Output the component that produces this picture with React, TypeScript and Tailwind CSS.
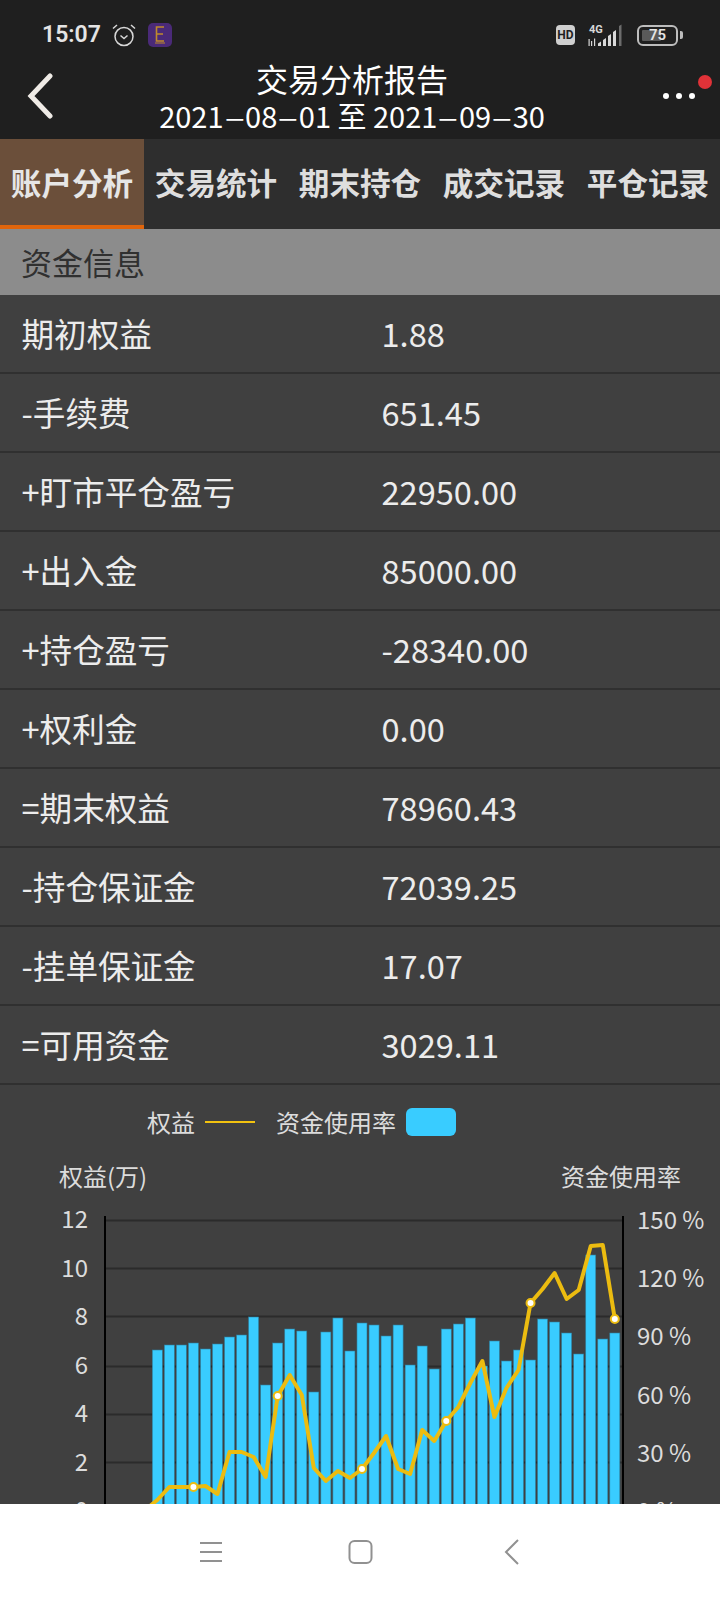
const rows = [
  ["期初权益", "1.88"],
  ["-手续费", "651.45"],
  ["+盯市平仓盈亏", "22950.00"],
  ["+出入金", "85000.00"],
  ["+持仓盈亏", "-28340.00"],
  ["+权利金", "0.00"],
  ["=期末权益", "78960.43"],
  ["-持仓保证金", "72039.25"],
  ["-挂单保证金", "17.07"],
  ["=可用资金", "3029.11"],
];

const tabs = ["账户分析", "交易统计", "期末持仓", "成交记录", "平仓记录"];

const leftTicks = ["12", "10", "8", "6", "4", "2", "0"];
const rightTicks = ["150 %", "120 %", "90 %", "60 %", "30 %", "0 %"];

// bar tops and line points, in page pixels
const barTops = [
  1350, 1345, 1345, 1343, 1349, 1344, 1337, 1335, 1317, 1385, 1343, 1329, 1331, 1392, 1332, 1318, 1351, 1323, 1325, 1336,
  1325, 1365, 1346, 1369, 1329, 1324, 1318, 1366, 1341, 1361, 1350, 1360, 1319, 1322, 1333, 1354, 1255, 1339, 1333,
];
const lineYs = [
  1500, 1487, 1487, 1487, 1486, 1494, 1452, 1452, 1457, 1477, 1396, 1375, 1395, 1468, 1481, 1471, 1478, 1469, 1453, 1436,
  1469, 1474, 1430, 1441, 1421, 1407, 1383, 1361, 1417, 1388, 1370, 1303, 1289, 1273, 1299, 1290, 1246, 1245, 1319,
];
const dots = [3, 10, 17, 24, 31, 38];
const gridYs = [1220, 1268, 1316, 1366, 1414, 1462, 1510];

const PLOT_X = 104;
const PLOT_Y = 1216;
const barX = (i: number) => 157.3 + i * 12.04 - PLOT_X;

function Chart() {
  const pts = lineYs.map((y, i) => `${barX(i)},${y - PLOT_Y}`).join(" ");
  return (
    <svg width="520" height="300" viewBox="0 0 520 300" className="block shrink-0">
      {gridYs.map((y) => (
        <line key={y} x1="0" x2="518" y1={y - PLOT_Y + 0.5} y2={y - PLOT_Y + 0.5} stroke="#2b2b2b" strokeWidth="2" />
      ))}
      {barTops.map((t, i) => (
        <rect
          key={i}
          x={barX(i) - 5}
          y={t - PLOT_Y}
          width="10"
          height={300 - (t - PLOT_Y)}
          fill="#39ccff"
          stroke="#2f7f9e"
          strokeWidth="0.6"
        />
      ))}
      <line x1="1" x2="1" y1="0" y2="300" stroke="#000" strokeWidth="2" />
      <line x1="519" x2="519" y1="0" y2="300" stroke="#000" strokeWidth="2" />
      <polyline points={`46,${1506 - PLOT_Y} ${pts}`} fill="none" stroke="#ecbc10" strokeWidth="4" strokeLinejoin="round" />
      {dots.map((i) => (
        <circle key={i} cx={barX(i)} cy={lineYs[i] - PLOT_Y} r="4" fill="#fff" stroke="#ecbc10" strokeWidth="2" />
      ))}
    </svg>
  );
}

function StatusBar() {
  return (
    <div className="flex h-[52px] items-center pl-[42px] pr-[37px] pt-[18px]">
      <span className="text-[23px] font-semibold leading-[30px] text-[#e4e4e4] font-['Roboto',sans-serif]">15:07</span>
      <svg width="24" height="24" viewBox="0 0 24 24" className="ml-[11px]" fill="none" stroke="#d8d8d8" strokeWidth="1.5">
        <circle cx="12" cy="13.5" r="9" />
        <path d="M8.5 12.5l3.5 3 3.5-3" />
        <path d="M1 5.5l4-3.5M23 5.500l-4-3.500" />
      </svg>
      <div className="ml-[12px] flex h-[24px] w-[24px] items-center justify-center rounded-[5px] bg-[#4a2a78]">
        <svg width="12" height="20" viewBox="0 0 12 20" fill="none" stroke="#c08a2c" strokeWidth="1.6">
          <path d="M10 2H2.5v14H10M2.5 9H9" />
          <path d="M1 18h10" strokeWidth="1" />
        </svg>
      </div>
      <div className="flex-1" />
      <div className="flex h-[20px] w-[19px] items-center justify-center rounded-[4px] bg-[#cfcfcf]">
        <span className="text-[12px] font-bold leading-none text-[#1f1f1f] font-['Roboto',sans-serif]">HD</span>
      </div>
      <svg width="39" height="23" viewBox="0 0 39 23" className="ml-[12px]" fill="#d8d8d8">
        <text x="2" y="9" fontSize="11" fontWeight="700" fontFamily="Roboto, sans-serif">4G</text>
        <path d="M1.5 15v7h1.2v-7zM4 17v5h1.2v-5zM7 14.5v7.5h1.2v-7.5z" />
        <path d="M11 22v-2.5l3-2V22zM16 22v-6l3-2v8zM21 22v-10l3-2v12zM26 22V8l3-2v16z" />
        <path d="M32 22V2l2.5-1.500V22z" fill="#6c6c6c" />
      </svg>
      <div className="ml-[11px] flex items-center">
        <div className="relative flex h-[21px] w-[41px] items-center justify-center rounded-[6px] border-2 border-[#bdbdbd]">
          <div className="absolute left-[3px] top-[3px] h-[11px] w-[19px] rounded-[1px] bg-[#5a5a5a]" />
          <span className="relative text-[15px] font-semibold leading-none text-[#e4e4e4] font-['Roboto',sans-serif]">75</span>
        </div>
        <div className="ml-[2px] h-[8px] w-[3px] rounded-r-[2px] bg-[#bdbdbd]" />
      </div>
    </div>
  );
}

function Dash() {
  return <span className="mx-[3px] inline-block scale-x-[1.3]">–</span>;
}

function TitleBar() {
  return (
    <div className="relative flex h-[87px] flex-col items-center pr-[16px] pt-[6px]">
      <svg width="30" height="46" viewBox="0 0 30 46" className="absolute left-[25px] top-[21px]" fill="none" stroke="#efebe6" strokeWidth="5" strokeLinecap="round">
        <path d="M25 3L6 23l19 20" />
      </svg>
      <div className="text-[32px] leading-[40px] text-white">交易分析报告</div>
      <div className="whitespace-nowrap text-[29px] leading-[35px] text-white">
        2021<Dash />08<Dash />01 至 2021<Dash />09<Dash />30
      </div>
      <div className="absolute left-[663px] top-[41px] flex gap-[7px]">
        <div className="h-[6px] w-[6px] rounded-full bg-white" />
        <div className="h-[6px] w-[6px] rounded-full bg-white" />
        <div className="h-[6px] w-[6px] rounded-full bg-white" />
      </div>
      <div className="absolute left-[698px] top-[23px] h-[14px] w-[14px] rounded-full bg-[#e03238]" />
    </div>
  );
}

export default function App() {
  return (
    <div className="flex h-[1600px] w-[720px] flex-col overflow-hidden bg-[#404040] font-['Noto_Sans_CJK_SC',sans-serif]">
      <div className="bg-[#1f1f1f]">
        <StatusBar />
        <TitleBar />
      </div>

      <div className="flex h-[90px] bg-[#2e2e2e]">
        {tabs.map((t, i) => (
          <div
            key={t}
            className={
              i === 0
                ? "flex w-[144px] items-center justify-center border-b-[4px] border-[#e0650c] bg-[#6b4f3a] pt-[2px] text-[30.6px] font-bold text-[#e6e6e6]"
                : "flex w-[144px] items-center justify-center pb-[2px] text-[30.6px] font-bold text-[#dedede]"
            }
          >
            {t}
          </div>
        ))}
      </div>

      <div className="flex h-[66px] items-center bg-[#8c8c8c] pl-[21px] text-[31px] text-[#303030]">资金信息</div>

      <div className="min-h-0 flex-1 overflow-hidden">
        {rows.map(([label, value]) => (
          <div key={label} className="flex h-[79px] items-center border-b-2 border-[#303030] pl-[21.5px] text-[32.6px] text-[#ececec]">
            <span className="w-[360px]">{label}</span>
            <span>{value}</span>
          </div>
        ))}

        <div className="flex h-[76px] items-center pb-[2px] pl-[147px] text-[24px] text-[#dcdcdc]">
          <span>权益</span>
          <div className="ml-[10px] h-[2px] w-[50px] bg-[#f2c20f]" />
          <span className="ml-[21px]">资金使用率</span>
          <div className="ml-[10px] h-[28px] w-[50px] rounded-[6px] bg-[#39ccff]" />
        </div>

        <div className="flex items-center justify-between pl-[59px] pr-[39px] text-[24px] leading-[30px] text-[#dcdcdc]">
          <span>权益(万)</span>
          <span>资金使用率</span>
        </div>

        <div className="mt-[25px] flex">
          <div className="-mt-[22px] w-[88px] shrink-0 text-right text-[24px] leading-[48.5px] text-[#dcdcdc]">
            {leftTicks.map((t) => (
              <div key={t}>{t}</div>
            ))}
          </div>
          <div className="ml-[16px]">
            <Chart />
          </div>
          <div className="-mt-[26px] ml-[13px] whitespace-nowrap text-[24px] leading-[58.2px] text-[#dcdcdc]">
            {rightTicks.map((t) => (
              <div key={t}>{t}</div>
            ))}
          </div>
        </div>
      </div>

      <div className="flex h-[96px] shrink-0 items-start bg-white">
        <svg width="720" height="96" viewBox="0 0 720 96" fill="none" stroke="#919191" strokeWidth="2">
          <path d="M200 39h22M200 48h22M200 57h22" />
          <rect x="349.500" y="37" width="22" height="22" rx="5" />
          <path d="M518 36L506 48l12 12" />
        </svg>
      </div>
    </div>
  );
}
